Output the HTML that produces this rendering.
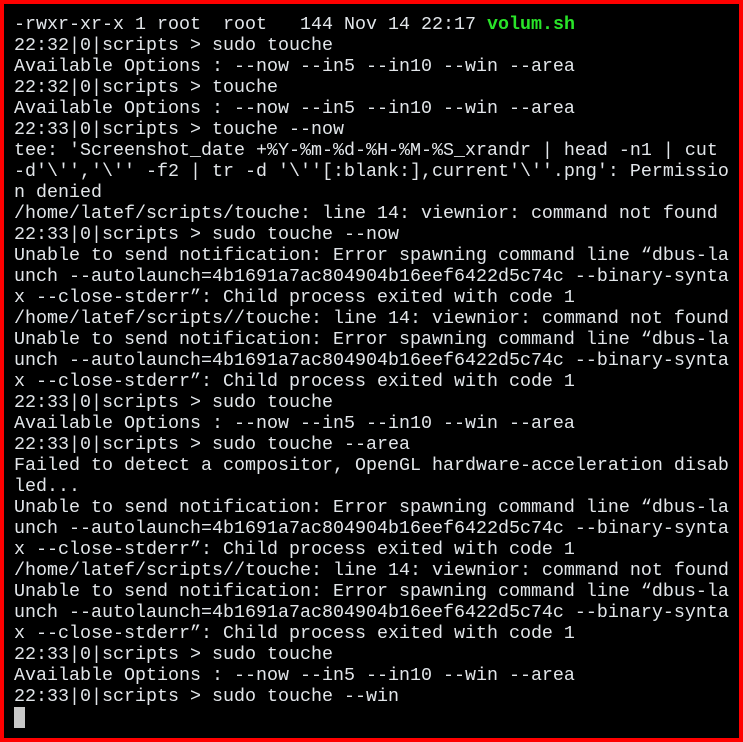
<!DOCTYPE html>
<html><head><meta charset="utf-8"><style>
html,body{margin:0;padding:0;background:#000;}
body{width:743px;height:742px;overflow:hidden;}
.t{position:absolute;left:0;top:0;width:735px;height:734px;border:4px solid #f00;background:#000;}
pre{position:absolute;left:10px;top:9.5px;margin:0;font-family:"Liberation Mono",monospace;font-size:18.33px;line-height:21px;color:#e2e6ea;white-space:pre;}
.g{color:#29e429;font-weight:bold;}
.c{display:inline-block;width:11px;height:21px;background:#c8c8c8;vertical-align:top;}
</style></head><body><div class="t"><pre>-rwxr-xr-x 1 root  root   144 Nov 14 22:17 <span class="g">volum.sh</span>
22:32|0|scripts &gt; sudo touche
Available Options : --now --in5 --in10 --win --area
22:32|0|scripts &gt; touche
Available Options : --now --in5 --in10 --win --area
22:33|0|scripts &gt; touche --now
tee: 'Screenshot_date +%Y-%m-%d-%H-%M-%S_xrandr | head -n1 | cut
-d'\'','\'' -f2 | tr -d '\''[:blank:],current'\''.png': Permissio
n denied
/home/latef/scripts/touche: line 14: viewnior: command not found
22:33|0|scripts &gt; sudo touche --now
Unable to send notification: Error spawning command line “dbus-la
unch --autolaunch=4b1691a7ac804904b16eef6422d5c74c --binary-synta
x --close-stderr”: Child process exited with code 1
/home/latef/scripts//touche: line 14: viewnior: command not found
Unable to send notification: Error spawning command line “dbus-la
unch --autolaunch=4b1691a7ac804904b16eef6422d5c74c --binary-synta
x --close-stderr”: Child process exited with code 1
22:33|0|scripts &gt; sudo touche
Available Options : --now --in5 --in10 --win --area
22:33|0|scripts &gt; sudo touche --area
Failed to detect a compositor, OpenGL hardware-acceleration disab
led...
Unable to send notification: Error spawning command line “dbus-la
unch --autolaunch=4b1691a7ac804904b16eef6422d5c74c --binary-synta
x --close-stderr”: Child process exited with code 1
/home/latef/scripts//touche: line 14: viewnior: command not found
Unable to send notification: Error spawning command line “dbus-la
unch --autolaunch=4b1691a7ac804904b16eef6422d5c74c --binary-synta
x --close-stderr”: Child process exited with code 1
22:33|0|scripts &gt; sudo touche
Available Options : --now --in5 --in10 --win --area
22:33|0|scripts &gt; sudo touche --win
<span class="c"></span></pre></div></body></html>
